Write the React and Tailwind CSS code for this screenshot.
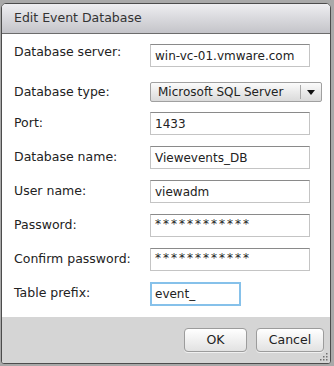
import React from 'react';

const font = { fontFamily: '"DejaVu Sans", Verdana, sans-serif' };

const Field = ({ label, value, labelClass = '', width = 'w-[160px]', focused = false, masked = false }) => (
  <div className="flex items-center h-[23px]">
    <div className={`w-[136px] text-[12.5px] text-[#222] ${labelClass}`}>{label}</div>
    <div
      className={
        focused
          ? `${width} h-[24px] border-2 border-[#86c1ea] bg-white px-[3px] flex items-center text-[12px] text-[#222]`
          : `${width} h-[23px] border border-[#c4c4c4] border-t-[#8a8a8a] bg-white px-[4px] flex items-center text-[12px] text-[#222]`
      }
    >
      <span className={masked ? 'tracking-[2px] text-[12px] -mt-[3px]' : ''}>{value}</span>
    </div>
  </div>
);

const Grip = () => (
  <svg width="9" height="9" viewBox="0 0 9 9" className="absolute right-[2px] bottom-[2px]">
    {[
      [7, 1], [7, 4], [4, 4], [7, 7], [4, 7], [1, 7],
    ].map(([x, y], i) => (
      <rect key={i} x={x} y={y} width="1.5" height="1.5" fill="#707070" />
    ))}
  </svg>
);

const Button = ({ children, width }) => (
  <button
    className={`${width} h-[24px] rounded-[4px] border border-[#9c9c9c] bg-gradient-to-b from-[#ffffff] to-[#e2e2e2] text-[12.5px] text-[#222] shadow-[0_1px_0_#f0f0f0]`}
  >
    {children}
  </button>
);

export default function App() {
  return (
    <div className="w-[334px] h-[366px] bg-[#a9a9a9] pt-[3px] pl-[1px] pr-[3px] pb-[2px]" style={font}>
      <div className="relative flex flex-col h-full border border-[#4c4c4c] rounded-t-[5px] rounded-b-[3px] overflow-hidden bg-white">
        <div className="h-[30px] shrink-0 flex items-center px-[12px] bg-gradient-to-b from-[#eeeef1] to-[#c4c4c9] border-b border-[#6c6c6c] text-[12.5px] text-[#333]">
          Edit Event Database
        </div>

        <div className="flex-1 bg-white pl-[12px] pt-[10px] flex flex-col">
          <Field label="Database server:" value="win-vc-01.vmware.com" labelClass="-mt-[6px]" />

          <div className="flex items-center h-[20px] mt-[15px]">
            <div className="w-[136px] text-[12.5px] text-[#222]">Database type:</div>
            <div className="w-[172px] h-[20px] flex items-center rounded-[2px] border border-[#a0a0a0] bg-gradient-to-b from-[#fbfbfb] to-[#dadada] text-[12px] text-[#222]">
              <span className="flex-1 pl-[7px]">Microsoft SQL Server</span>
              <span className="w-px h-[14px] bg-[#a8a8a8]" />
              <span className="w-[20px] flex justify-center">
                <svg width="8" height="5" viewBox="0 0 8 5">
                  <path d="M0 0h8L4 5z" fill="#111" />
                </svg>
              </span>
            </div>
          </div>

          <div className="flex flex-col gap-[11px] mt-[10px]">
            <Field label="Port:" value="1433" />
            <Field label="Database name:" value="Viewevents_DB" />
            <Field label="User name:" value="viewadm" />
            <Field label="Password:" value="************" masked />
            <Field label="Confirm password:" value="************" masked />
            <Field label="Table prefix:" value="event_" width="w-[91px]" focused />
          </div>
        </div>

        <div className="h-[46px] shrink-0 bg-[#d5d5d5] flex items-start justify-end gap-[9px] pt-[11px] pr-[6px]">
          <Button width="w-[63px]">OK</Button>
          <Button width="w-[68px]">Cancel</Button>
        </div>
        <Grip />
      </div>
    </div>
  );
}
